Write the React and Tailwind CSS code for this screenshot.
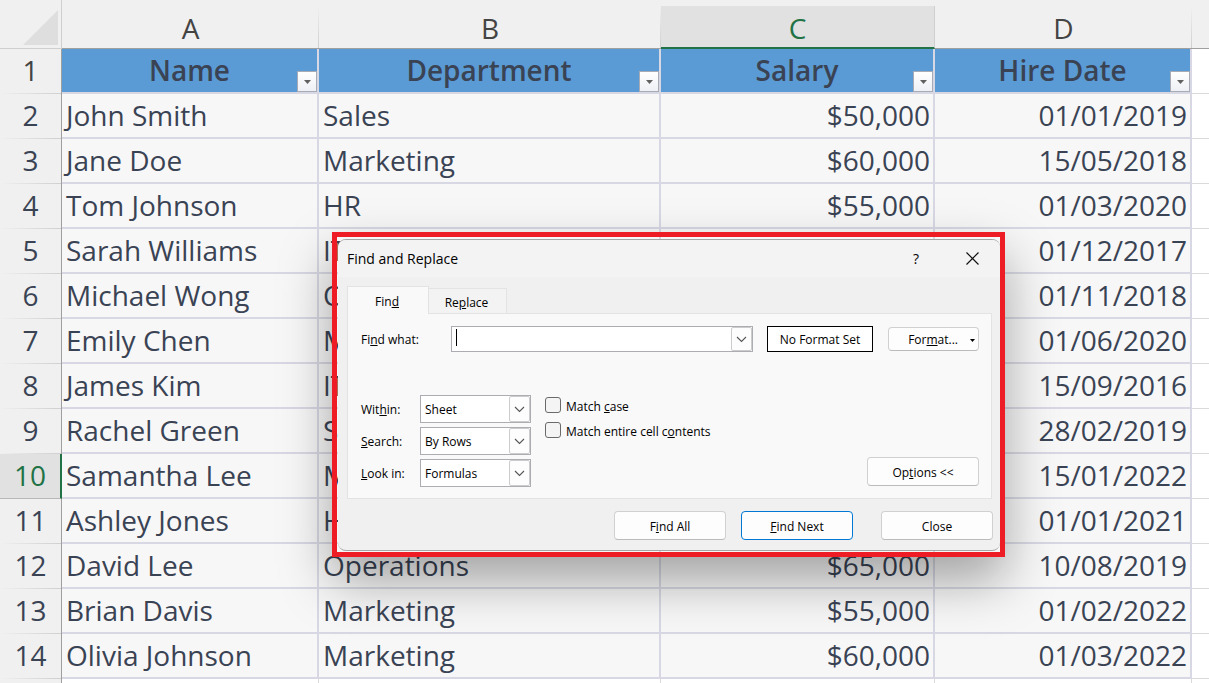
import React from "react";

const ROWS = [
  ["John Smith", "Sales", "$50,000", "01/01/2019"],
  ["Jane Doe", "Marketing", "$60,000", "15/05/2018"],
  ["Tom Johnson", "HR", "$55,000", "01/03/2020"],
  ["Sarah Williams", "IT", "$70,000", "01/12/2017"],
  ["Michael Wong", "Operations", "$65,000", "01/11/2018"],
  ["Emily Chen", "Marketing", "$55,000", "01/06/2020"],
  ["James Kim", "IT", "$75,000", "15/09/2016"],
  ["Rachel Green", "Sales", "$50,000", "28/02/2019"],
  ["Samantha Lee", "Marketing", "$60,000", "15/01/2022"],
  ["Ashley Jones", "HR", "$55,000", "01/01/2021"],
  ["David Lee", "Operations", "$65,000", "10/08/2019"],
  ["Brian Davis", "Marketing", "$55,000", "01/02/2022"],
  ["Olivia Johnson", "Marketing", "$60,000", "01/03/2022"],
];

const COLUMNS = ["Name", "Department", "Salary", "Hire Date"];
const LETTERS = ["A", "B", "C", "D"];
const ACTIVE_ROW = 10;

function ColumnLetter({ letter }) {
  const active = letter === "C";
  return (
    <th scope="col" className="h-[49px] p-0 pt-[6px] align-top font-normal">
      <div
        className={
          active
            ? "flex h-[43px] items-center justify-center border-r border-b-2 border-r-[#cfcfcf] border-b-[#217346] bg-[#e1e1e1] pt-[2px] text-[#217346]"
            : "flex h-[43px] items-center justify-center border-b border-b-[#9f9f9f] bg-[linear-gradient(to_bottom,transparent,#cfcfcf)] bg-[length:1px_100%] bg-right bg-no-repeat pt-px"
        }
      >
        {letter}
      </div>
    </th>
  );
}

function RowNumber({ n }) {
  const active = n === ACTIVE_ROW;
  return (
    <th
      scope="row"
      className={
        active
          ? "h-[45px] border-r-2 border-b border-r-[#217346] border-b-[#b8b8b8] bg-[#e1e1e1] p-0 pb-[3px] text-center font-normal text-[#217346]"
          : "h-[45px] border-r border-r-[#9f9f9f] bg-[#f0f0f0] bg-[linear-gradient(to_right,transparent,#cfcfcf)] bg-[length:100%_1px] bg-bottom bg-no-repeat p-0 pb-[4px] text-center font-normal"
      }
    >
      {n}
    </th>
  );
}

function Sheet() {
  return (
    <table className="w-full table-fixed border-separate border-spacing-0 text-[28px] leading-[38px] text-[#444444]">
      <colgroup>
        <col className="w-[62px]" />
        <col className="w-[257px]" />
        <col className="w-[342px]" />
        <col className="w-[274px]" />
        <col className="w-[257px]" />
        <col />
      </colgroup>
      <thead>
        <tr className="bg-[#f0f0f0]">
          <th className="h-[49px] border-r border-b border-r-[#cfcfcf] border-b-[#cfcfcf] p-0 pt-[10px] pr-[3px] align-top">
            <svg className="ml-auto block" width="35" height="35" viewBox="0 0 35 35" aria-label="Select all">
              <path d="M35 0V35H0Z" fill="#dedede" />
            </svg>
          </th>
          {LETTERS.map((l) => (
            <ColumnLetter key={l} letter={l} />
          ))}
          <th className="border-b border-b-[#9f9f9f] p-0" />
        </tr>
      </thead>
      <tbody>
        <tr>
          <RowNumber n={1} />
          {COLUMNS.map((c) => (
            <td
              key={c}
              className="h-[45px] border-r-2 border-b-2 border-[#d8d8e4] bg-[#5b9bd5] p-0 font-semibold text-[#3a4354]"
            >
              <div className="relative flex h-[43px] items-center justify-center pb-[2px]">
                {c}
                <button
                  type="button"
                  aria-label={"Filter " + c}
                  className="absolute right-0 bottom-0 flex h-[21px] w-[20px] items-center justify-center border border-[#a6abb5] bg-linear-to-b from-white to-[#eef0f5]"
                >
                  <svg width="7" height="4" viewBox="0 0 7 4">
                    <path d="M0 0H7L3.5 4Z" fill="#606060" />
                  </svg>
                </button>
              </div>
            </td>
          ))}
          <td className="border-b border-[#dadada]" />
        </tr>
        {ROWS.map((row, i) => (
          <tr key={row[0]} className="text-[#3a4354]">
            <RowNumber n={i + 2} />
            {row.map((cell, j) => (
              <td
                key={j}
                className={
                  j > 1
                    ? "h-[45px] border-r-2 border-b-2 border-[#d8d8e4] bg-[#f7f7f7] px-[3px] pt-0 pb-[2px] text-right whitespace-nowrap"
                    : "h-[45px] border-r-2 border-b-2 border-[#d8d8e4] bg-[#f7f7f7] px-[4px] pt-0 pb-[2px] text-left whitespace-nowrap"
                }
              >
                {cell}
              </td>
            ))}
            <td className="border-b border-[#dadada]" />
          </tr>
        ))}
        <tr>
          <th className="h-[45px] border-r border-r-[#9f9f9f] bg-[#f0f0f0]" />
          {LETTERS.map((l) => (
            <td key={l} className="border-r border-[#dadada]" />
          ))}
          <td />
        </tr>
      </tbody>
    </table>
  );
}

function DropArrow() {
  return (
    <span className="pointer-events-none absolute top-px right-px bottom-px flex w-[21px] items-center justify-center rounded-[2px] border border-[#cccccc] bg-[#fdfdfd]">
      <svg width="11" height="7" viewBox="0 0 11 7" fill="none" stroke="#555555" strokeWidth="1.1">
        <path d="M1 1L5.5 5.5L10 1" />
      </svg>
    </span>
  );
}

function SelectField({ id, label, value }) {
  return (
    <div className="flex h-[28px] items-center">
      <label htmlFor={id} className="w-[59px] pt-[2px]">
        {label}
      </label>
      <div className="relative h-[28px] w-[111px]">
        <select
          id={id}
          defaultValue={value}
          className="h-full w-full appearance-none border border-[#abadb3] bg-white pt-[2px] pl-[4px] outline-none"
        >
          <option>{value}</option>
        </select>
        <DropArrow />
      </div>
    </div>
  );
}

function CheckField({ id, children }) {
  return (
    <div className="flex h-[17px] items-center gap-[5px]">
      <input
        id={id}
        type="checkbox"
        className="h-[16px] w-[16px] appearance-none rounded-[3px] border border-[#6a6a6a] bg-[#f4f4f4]"
      />
      <label htmlFor={id} className="pt-[4px]">
        {children}
      </label>
    </div>
  );
}

function PushButton({ primary, children }) {
  return (
    <button
      type="button"
      className={
        primary
          ? "h-[29px] w-[112px] rounded-[4px] border border-[#0078d4] bg-[#fdfdfd] pt-[2px]"
          : "h-[29px] w-[112px] rounded-[4px] border border-[#d0d0d0] border-b-[#bbbbbb] bg-[#fdfdfd] pt-[2px]"
      }
    >
      {children}
    </button>
  );
}

function FindDialog() {
  return (
    <div
      role="dialog"
      aria-label="Find and Replace"
      className="overflow-hidden rounded-[8px] border-t border-b border-[#a5a5a5] bg-[#f0f0f0] text-[12px] leading-[16px] text-black"
    >
      <div className="flex h-[37px] items-center bg-[#f3f3f3] pl-[9px]">
        <h1 className="flex-1 text-[14px]">Find and Replace</h1>
        <button type="button" aria-label="Help" className="flex h-full w-[58px] items-center justify-center text-[14px]">
          ?
        </button>
        <button type="button" aria-label="Close dialog" className="flex h-full w-[55px] items-center justify-center">
          <svg width="13" height="13" viewBox="0 0 13 13" fill="none" stroke="#111111" strokeWidth="1.2">
            <path d="M0.5 0.5L12.5 12.5M12.5 0.5L0.5 12.5" />
          </svg>
        </button>
      </div>

      <div className="pt-[9px] pr-[8px] pl-[9px]">
        <div role="tablist" className="flex items-end">
          <button
            type="button"
            role="tab"
            aria-selected="true"
            className="relative z-10 -mb-px h-[28px] w-[82px] border border-b-0 border-[#e3e3e3] bg-[#f9f9f9] pt-[2px] pr-[2px]"
          >
            Fin<u>d</u>
          </button>
          <button
            type="button"
            role="tab"
            aria-selected="false"
            className="h-[25px] w-[78px] border border-b-0 border-l-0 border-[#e3e3e3] bg-[#f3f3f3] pt-[3px] pr-[2px]"
          >
            Re<u>p</u>lace
          </button>
        </div>

        <div role="tabpanel" className="border border-[#e3e3e3] bg-[#f9f9f9] pt-[12px] pr-[12px] pb-[11px] pl-[13px]">
          <div className="flex h-[26px] items-center">
            <label htmlFor="find-what" className="w-[90px] pt-[2px]">
              Fi<u>n</u>d what:
            </label>
            <div className="relative h-[26px] flex-1">
              <input
                id="find-what"
                type="text"
                className="h-full w-full border border-[#abadb3] bg-white pl-[4px] outline-none"
              />
              <span className="absolute top-[3px] left-[5px] h-[17px] w-px bg-black" />
              <DropArrow />
            </div>
            <output className="ml-[14px] flex h-[26px] w-[106px] items-center justify-center border border-black bg-white pt-[2px]">
              No Format Set
            </output>
            <button
              type="button"
              className="ml-[15px] flex h-[24px] w-[91px] items-center justify-end gap-[12px] rounded-[4px] border border-[#d0d0d0] border-b-[#bbbbbb] bg-[#fdfdfd] pt-[2px] pr-[3px]"
            >
              <span>
                For<u>m</u>at...
              </span>
              <svg width="5" height="3" viewBox="0 0 5 3">
                <path d="M0 0H5L2.5 3Z" fill="#000000" />
              </svg>
            </button>
          </div>

          <div className="mt-[43px] flex">
            <div className="flex flex-col gap-[4px]">
              <SelectField id="within" value="Sheet" label={<>Wit<u>h</u>in:</>} />
              <SelectField id="search" value="By Rows" label={<><u>S</u>earch:</>} />
              <SelectField id="look-in" value="Formulas" label={<><u>L</u>ook in:</>} />
            </div>
            <div className="ml-[14px] flex flex-1 flex-col gap-[8px] pt-px">
              <CheckField id="match-case">
                Match <u>c</u>ase
              </CheckField>
              <CheckField id="match-entire">
                Match entire cell c<u>o</u>ntents
              </CheckField>
            </div>
            <div className="flex items-end pb-px">
              <PushButton>
                Op<u>t</u>ions &lt;&lt;
              </PushButton>
            </div>
          </div>
        </div>
      </div>

      <div className="flex justify-end pt-[12px] pr-[7px] pb-[10px]">
        <PushButton>
          F<u>i</u>nd All
        </PushButton>
        <div className="mr-[28px] ml-[15px]">
          <PushButton primary>
            <u>F</u>ind Next
          </PushButton>
        </div>
        <PushButton>Close</PushButton>
      </div>
    </div>
  );
}

export default function App() {
  return (
    <main className="relative h-screen overflow-hidden bg-white font-['Open_Sans','Noto_Sans',sans-serif]">
      <Sheet />
      <div className="absolute top-[232px] left-[332px] w-[673px] border-[5px] border-[#ee1c24] pt-[2px] pb-px pl-px shadow-[0_24px_48px_rgba(0,0,0,0.34)]">
        <FindDialog />
      </div>
    </main>
  );
}
